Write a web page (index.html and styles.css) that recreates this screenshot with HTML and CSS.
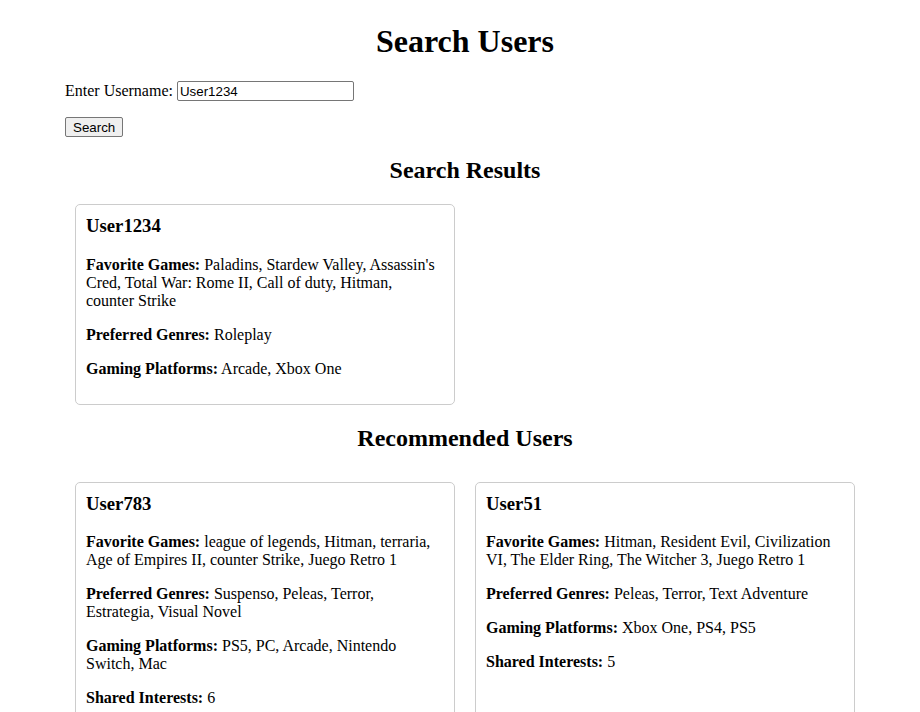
FILE: index.html
```html
<!DOCTYPE html>
<html>
<head>
<meta charset="utf-8">
<link rel="stylesheet" href="styles.css">
</head>
<body>
<div class="container">
  <h1>Search Users</h1>
  <form class="search-form">
    <p class="field"><label for="username">Enter Username:</label> <input id="username" type="text" value="User1234"></p>
    <p class="actions"><button type="button">Search</button></p>
  </form>
  <h2>Search Results</h2>
  <div class="cards results">
    <div class="card">
      <h3>User1234</h3>
      <p><strong>Favorite Games:</strong> Paladins, Stardew Valley, Assassin's Cred, Total War: Rome II, Call of duty, Hitman, counter Strike</p>
      <p><strong>Preferred Genres:</strong> Roleplay</p>
      <p><strong>Gaming Platforms:</strong> Arcade, Xbox One</p>
    </div>
  </div>
  <h2>Recommended Users</h2>
  <div class="cards recommended">
    <div class="card">
      <h3>User783</h3>
      <p><strong>Favorite Games:</strong> league of legends, Hitman, terraria, Age of Empires II, counter Strike, Juego Retro 1</p>
      <p><strong>Preferred Genres:</strong> Suspenso, Peleas, Terror, Estrategia, Visual Novel</p>
      <p><strong>Gaming Platforms:</strong> PS5, PC, Arcade, Nintendo Switch, Mac</p>
      <p><strong>Shared Interests:</strong> 6</p>
    </div>
    <div class="card">
      <h3>User51</h3>
      <p><strong>Favorite Games:</strong> Hitman, Resident Evil, Civilization VI, The Elder Ring, The Witcher 3, Juego Retro 1</p>
      <p><strong>Preferred Genres:</strong> Peleas, Terror, Text Adventure</p>
      <p><strong>Gaming Platforms:</strong> Xbox One, PS4, PS5</p>
      <p><strong>Shared Interests:</strong> 5</p>
    </div>
  </div>
</div>
</body>
</html>
```
FILE: styles.css
```css
html, body {
  background: #ffffff;
}
body {
  margin: 8px;
  padding-left: 10px;
  font-family: "Liberation Serif", "Times New Roman", serif;
  font-size: 16px;
  color: #000;
}
.container {
  max-width: 800px;
  margin: 0 auto;
}
h1 {
  text-align: center;
  font-size: 32px;
  margin: 15px 0 21px;
}
h2 {
  text-align: center;
  font-size: 24px;
  margin: 20px 0;
}
.search-form p {
  margin: 16px 0;
}
.search-form input {
  font-family: "Liberation Sans", Arial, sans-serif;
  font-size: 13.33px;
  width: 177px;
  height: 20px;
  box-sizing: border-box;
  padding: 1px 2px;
  border: 1px solid #767676;
  border-radius: 2px;
  vertical-align: baseline;
}
.search-form button {
  font-family: "Liberation Sans", Arial, sans-serif;
  font-size: 13.33px;
  height: 20px;
  padding: 1px 7px;
  border: 1px solid #767676;
  border-radius: 2px;
  background: #efefef;
  color: #000;
}
.cards {
  display: flex;
  flex-wrap: wrap;
}
.cards.recommended {
  padding-top: 10px;
}
.card {
  box-sizing: border-box;
  width: calc(50% - 20px);
  margin: 0 10px;
  padding: 10px;
  border: 1px solid #cccccc;
  border-radius: 5px;
}
.card h3 {
  font-size: 18.72px;
  margin: 0 0 18.72px;
}
.card p {
  margin: 16px 0;
}
```
